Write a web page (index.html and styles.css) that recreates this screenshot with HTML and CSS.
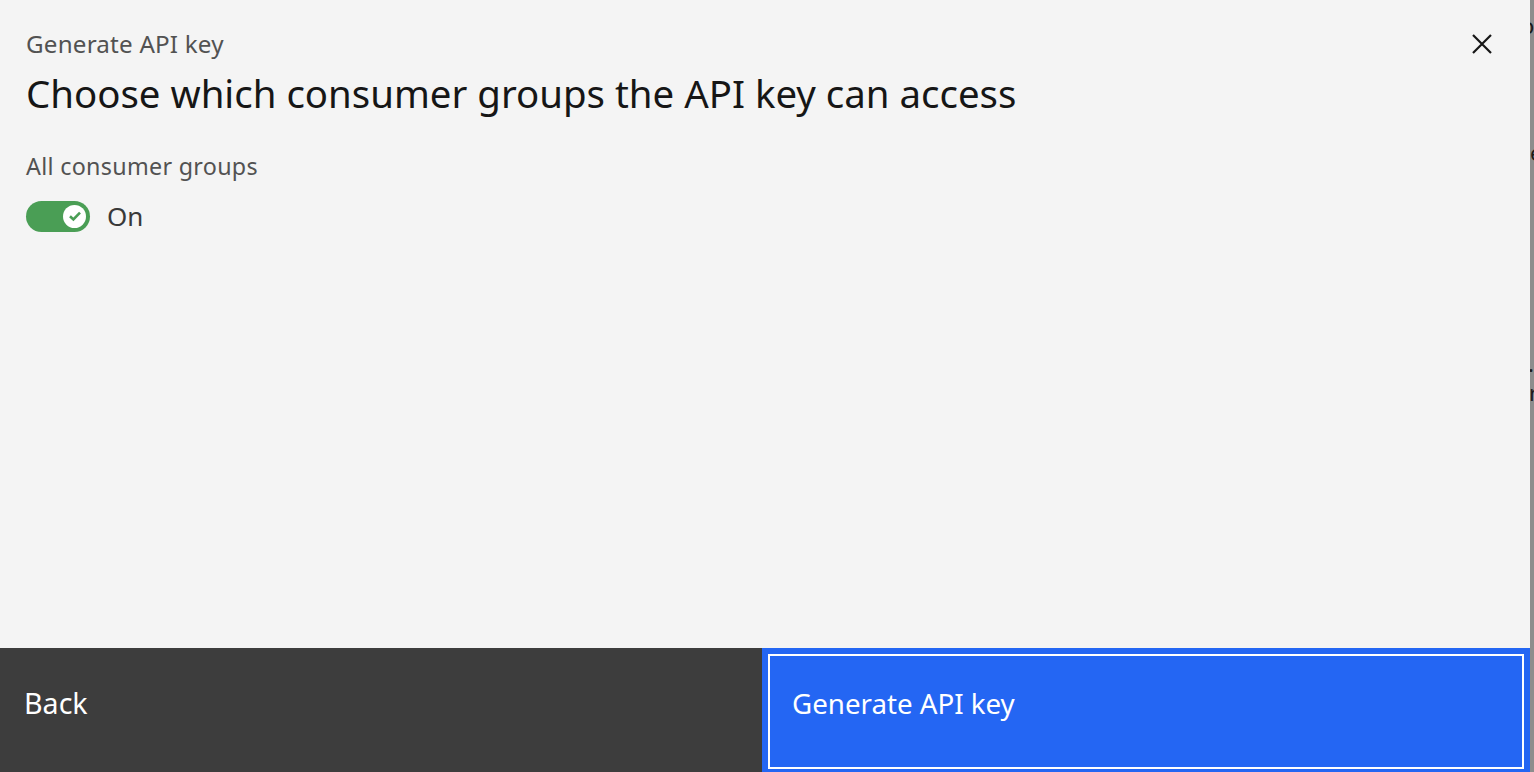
FILE: index.html
```html
<!DOCTYPE html>
<html lang="en">
<head>
<meta charset="utf-8">
<title>Generate API key</title>
<link rel="stylesheet" href="styles.css">
</head>
<body>
<div class="backdrop-text">
  <span class="bt bt-1">o</span>
  <span class="bt bt-2">e</span>
  <span class="bt bt-3">.</span>
  <span class="bt bt-4">r</span>
</div>
<div class="modal" role="dialog">
  <div class="modal-header">
    <div class="titles">
      <p class="label">Generate API key</p>
      <h2 class="heading">Choose which consumer groups the API key can access</h2>
    </div>
    <button class="close" aria-label="Close">
      <svg width="20" height="20" viewBox="0 0 20 20"><path d="M1 1 L19 19 M19 1 L1 19" stroke="#161616" stroke-width="2.2" fill="none"/></svg>
    </button>
  </div>
  <div class="modal-body">
    <div class="field-label">All consumer groups</div>
    <div class="toggle-row">
      <span class="toggle">
        <span class="knob">
          <svg width="14" height="12" viewBox="0 0 14 12"><path d="M2 6.2 L5.4 9.4 L12 2.6" stroke="#4a9e55" stroke-width="2.6" fill="none"/></svg>
        </span>
      </span>
      <span class="toggle-text">On</span>
    </div>
  </div>
  <div class="modal-footer">
    <button class="btn btn-secondary">Back</button>
    <button class="btn btn-primary">Generate API key</button>
  </div>
</div>
</body>
</html>
```

FILE: styles.css
```css
html, body {
  margin: 0;
  padding: 0;
  height: 100%;
}
body {
  background: #8d8d8d;
  overflow: hidden;
  position: relative;
  font-family: "Noto Sans", "Open Sans", sans-serif;
  color: #161616;
}
.backdrop-text {
  position: absolute;
  inset: 0;
  z-index: 0;
}
.bt {
  position: absolute;
  font-size: 22px;
  line-height: 1;
  color: #1a1a1a;
}
.bt-1 { left: 1521px; top: 14px; }
.bt-2 { left: 1530px; top: 141px; }
.bt-3 { left: 1528px; top: 352px; }
.bt-4 { left: 1529px; top: 381px; }
.modal {
  position: relative;
  z-index: 1;
  width: 1530px;
  height: 775px;
  background: #f4f4f4;
  display: flex;
  flex-direction: column;
}
.modal-header {
  display: flex;
  justify-content: space-between;
  align-items: flex-start;
  padding: 30px 0 0 26px;
}
.titles {
  display: flex;
  flex-direction: column;
}
.label {
  margin: 0;
  font-size: 24.2px;
  line-height: 28px;
  color: #525252;
  letter-spacing: 0.2px;
}
.heading {
  margin: 11px 0 0;
  font-size: 38.4px;
  line-height: 48px;
  font-weight: 400;
  color: #161616;
}
.close {
  background: none;
  border: 0;
  padding: 0;
  margin: 4px 38px 0 0;
  width: 20px;
  height: 20px;
  cursor: pointer;
}
.close svg { display: block; }
.modal-body {
  flex: 1;
  padding: 35px 26px 0;
}
.field-label {
  font-size: 23.3px;
  line-height: 28px;
  color: #525252;
  letter-spacing: 0.3px;
}
.toggle-row {
  display: flex;
  align-items: center;
  gap: 17px;
  margin-top: 20px;
}
.toggle {
  width: 64px;
  height: 31px;
  border-radius: 16px;
  background: #4a9e55;
  display: flex;
  align-items: center;
  justify-content: flex-end;
  padding-right: 4px;
  box-sizing: border-box;
}
.knob {
  width: 23px;
  height: 23px;
  border-radius: 50%;
  background: #fff;
  display: flex;
  align-items: center;
  justify-content: center;
}
.knob svg { display: block; }
.toggle-text {
  font-size: 26px;
  line-height: 32px;
  color: #393939;
}
.modal-footer {
  display: grid;
  grid-template-columns: 762px 1fr;
  height: 127px;
}
.btn {
  border: 0;
  margin: 0;
  font-family: inherit;
  font-size: 27.7px;
  color: #fff;
  text-align: left;
  display: flex;
  align-items: center;
  cursor: pointer;
}
.btn-secondary {
  background: #3d3d3d;
  padding: 0 0 18px 24px;
  font-size: 28.6px;
}
.btn-primary {
  background: #2466f3;
  padding: 0 0 18px 30px;
  box-shadow: inset 0 0 0 6px #2466f3, inset 0 0 0 8px #ffffff;
}
```
